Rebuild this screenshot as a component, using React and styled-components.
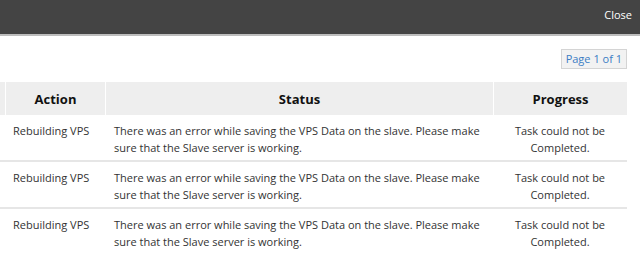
import React from "react";
import styled, { createGlobalStyle } from "styled-components";

const Global = createGlobalStyle`
  html, body { margin: 0; padding: 0; background: #fff; }
  body { font-family: "Open Sans", "Liberation Sans", sans-serif; font-size: 11px; color: #333; }
`;

const Page = styled.div`
  width: 640px;
  height: 256px;
  overflow: hidden;
`;

const TopBar = styled.div`
  height: 34px;
  background: #444444;
  border-bottom: 2px solid #bdbdbd;
  display: flex;
  align-items: center;
  justify-content: flex-end;
  padding: 0 8px;
`;

const CloseLink = styled.span`
  color: #fff;
  font-size: 11px;
  margin-top: -5px;
`;

const Content = styled.div`
  padding: 13px 13px 0 0;
`;

const PagerRow = styled.div`
  display: flex;
  justify-content: flex-end;
  margin-bottom: 13px;
`;

const Pager = styled.div`
  height: 18px;
  line-height: 18px;
  padding: 0 4px;
  border: 1px solid #d4d4d4;
  background: #f2f2f2;
  color: #3b7dc4;
  font-size: 11px;
`;

const Table = styled.div`
  display: grid;
  grid-template-columns: 5px 99px 387px 1fr;
  column-gap: 1px;
`;

const HeadCell = styled.div`
  background: #eeeeee;
  height: 33px;
  display: flex;
  align-items: center;
  justify-content: center;
  font-weight: 700;
  font-size: 13px;
  color: #111;
`;

const Cell = styled.div`
  padding: 7px 8px 0;
  padding-left: ${(p) => p.$pl || "8px"};
  height: 47px;
  box-sizing: border-box;
  line-height: 17px;
  text-align: ${(p) => (p.$center ? "center" : "left")};
  border-bottom: ${(p) => (p.$last ? "none" : "2px solid #e6e6e6")};
  margin-left: ${(p) => (p.$first ? "0" : "-1px")};
`;

const rows = [1, 2, 3];

export default function App() {
  return (
    <Page>
      <Global />
      <TopBar>
        <CloseLink>Close</CloseLink>
      </TopBar>
      <Content>
        <PagerRow>
          <Pager>Page 1 of 1</Pager>
        </PagerRow>
        <Table>
          <HeadCell />
          <HeadCell>Action</HeadCell>
          <HeadCell>Status</HeadCell>
          <HeadCell>Progress</HeadCell>
          {rows.map((r, i) => (
            <React.Fragment key={r}>
              <Cell $first $last={i === rows.length - 1} $pl="0" />
              <Cell $last={i === rows.length - 1} $pl="8px">Rebuilding VPS</Cell>
              <Cell $last={i === rows.length - 1} $pl="9px">
                There was an error while saving the VPS Data on the slave. Please make sure that the Slave server is working.
              </Cell>
              <Cell $center $last={i === rows.length - 1}>
                Task could not be Completed.
              </Cell>
            </React.Fragment>
          ))}
        </Table>
      </Content>
    </Page>
  );
}
